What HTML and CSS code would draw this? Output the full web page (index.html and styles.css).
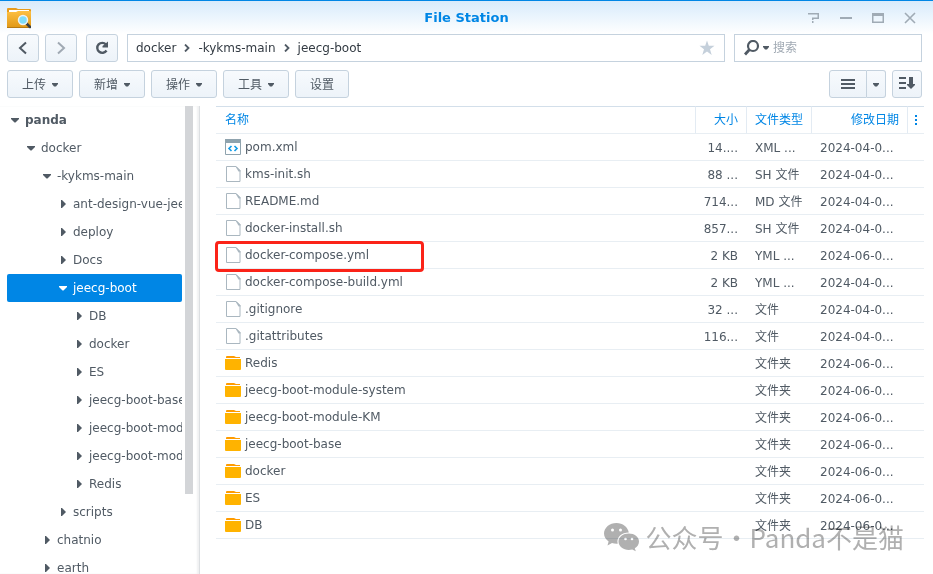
FILE: index.html
```html
<!DOCTYPE html>
<html lang="zh-CN">
<head>
    <meta charset="UTF-8">
    <meta name="viewport" content="width=device-width, initial-scale=1.0">
    <title>File Station</title>
    <link rel="stylesheet" href="styles.css">
</head>
<body>

<!-- Shared icons -->
<svg class="sprite" aria-hidden="true">
    <symbol id="caret" viewBox="0 0 6 4"><path d="M0 0h6v1L4 3.500H2L0 1z"/></symbol>
    <symbol id="open" viewBox="0 0 8 8"><path d="M0 2h8v1L4.500 6.500h-1L0 3z"/></symbol>
    <symbol id="closed" viewBox="0 0 8 8"><path d="M2 0h1l3.500 3.500v1L3 8H2z"/></symbol>
    <symbol id="sep" viewBox="0 0 6 8"><path d="M1 0.500L4.500 4 1 7.500" fill="none" stroke="#505a64" stroke-width="1.800"/></symbol>
    <symbol id="file" viewBox="0 0 16 16">
        <path d="M1.500 .500h9.500l4 4v11H1.500z" fill="#fff" stroke="#aab7c0"/>
        <path d="M10.500 0.500h1l4 4v1h-2z" fill="#aab7c0"/>
    </symbol>
    <symbol id="xml" viewBox="0 0 16 16">
        <path d="M.500 .500h15v15H.500z" fill="#fff" stroke="#8fa3ae"/>
        <path d="M0 0h16v4H0z" fill="#8fa3ae"/>
        <path d="M6.500 7L4 9.500 6.500 12M9.500 7l2.500 2.500L9.500 12" fill="none" stroke="#0f9be8" stroke-width="1.600"/>
    </symbol>
    <symbol id="folder" viewBox="0 0 16 16">
        <path d="M1 3V2q0-1 1-1h7l2 1h4v1z" fill="#ff9c00"/>
        <path d="M0 4h16v10q0 1-1 1H1q-1 0-1-1z" fill="#ffb300"/>
    </symbol>
</svg>

<div class="window">
    <header class="titlebar">
        <svg class="app-icon" viewBox="0 0 24 22">
            <defs>
                <linearGradient id="gold" x1="0" y1="0" x2="0" y2="1">
                    <stop offset="0" stop-color="#fdc044"/>
                    <stop offset="1" stop-color="#e29a18"/>
                </linearGradient>
            </defs>
            <path d="M0 2q0-1 1-1h8l2 1h12q1 0 1 1v17q0 1-1 1H1q-1 0-1-1z" fill="#e79b1c"/>
            <path d="M2 3h20v3H2z" fill="#fff"/>
            <path d="M0 5h9l2-1h12q1 0 1 1v15H0z" fill="url(#gold)"/>
            <path d="M0 20h24v1H0z" fill="#b67a13"/>
            <path d="M19 16l4 4" stroke="#3a3f42" stroke-width="2.500" stroke-linecap="round"/>
            <circle cx="16" cy="13" r="4.500" fill="#7fdcf8" stroke="#eef3f5" stroke-width="1.500"/>
        </svg>
        <h1 class="title">File Station</h1>
        <div class="controls">
            <button class="control" aria-label="帮助"><svg viewBox="0 0 12 12"><path d="M0 1.750h10.250v4.500H4.750V8M4.750 9v2" fill="none" stroke="#a0abb5" stroke-width="1.500"/></svg></button>
            <button class="control" aria-label="最小化"><svg viewBox="0 0 12 12"><path d="M0 5h12v2H0z" fill="#a0abb5"/></svg></button>
            <button class="control" aria-label="最大化"><svg viewBox="0 0 12 12"><path d="M0 1h12v10H0zM1.500 4v5.500h9V4z" fill="#a0abb5" fill-rule="evenodd"/></svg></button>
            <button class="control" aria-label="关闭"><svg viewBox="0 0 12 12"><path d="M1 1l10 10M11 1L1 11" stroke="#a0abb5" stroke-width="1.600"/></svg></button>
        </div>
    </header>

    <div class="navbar">
        <div class="history">
            <button class="btn btn-icon" aria-label="后退"><svg viewBox="0 0 16 16"><path d="M11 2.500L5 8l6 5.500" fill="none" stroke="#505a64" stroke-width="2"/></svg></button>
            <button class="btn btn-icon" aria-label="前进"><svg viewBox="0 0 16 16"><path d="M5 2.500L11 8l-6 5.500" fill="none" stroke="#a0a9b3" stroke-width="2"/></svg></button>
        </div>
        <button class="btn btn-icon" aria-label="刷新"><svg viewBox="0 0 16 16"><path d="M12 4.500A5 5 0 1 0 12.500 10.500" fill="none" stroke="#505a64" stroke-width="2.400"/><path d="M14 1.500V7.500H8.500V6z" fill="#505a64"/></svg></button>
        <nav class="path">
            <a href="#">docker</a>
            <svg class="sep"><use href="#sep"/></svg>
            <a href="#">-kykms-main</a>
            <svg class="sep"><use href="#sep"/></svg>
            <a href="#">jeecg-boot</a>
            <button class="star" aria-label="收藏"><svg viewBox="0 0 16 16"><path d="M8 .500l1.800 5.300H15.500l-4.500 3.500 1.700 5.700L8 11.600 3.300 15 5 9.300.500 5.800h5.700z" fill="#c5d0db"/></svg></button>
        </nav>
        <label class="search">
            <svg class="lens" viewBox="0 0 16 16"><circle cx="9" cy="6" r="5" fill="none" stroke="#505a64" stroke-width="2.200"/><path d="M5.500 9.500L1 14.500" stroke="#505a64" stroke-width="2.800"/></svg>
            <svg class="caret"><use href="#caret"/></svg>
            <input type="text" placeholder="搜索" aria-label="搜索">
        </label>
    </div>

    <div class="toolbar">
        <button class="btn">上传<svg class="caret"><use href="#caret"/></svg></button>
        <button class="btn">新增<svg class="caret"><use href="#caret"/></svg></button>
        <button class="btn">操作<svg class="caret"><use href="#caret"/></svg></button>
        <button class="btn">工具<svg class="caret"><use href="#caret"/></svg></button>
        <button class="btn">设置</button>
        <div class="views">
            <button class="btn btn-list" aria-label="列表"><svg viewBox="0 0 16 16"><path d="M1 3h14v2H1zM1 7h14v2H1zM1 11h14v2H1z" fill="#505a64"/></svg></button>
            <button class="btn btn-more" aria-label="视图模式"><svg class="caret"><use href="#caret"/></svg></button>
        </div>
        <button class="btn btn-sort" aria-label="排序"><svg viewBox="0 0 16 16"><path d="M0 1h7v2H0zM0 6h7v2H0zM0 11h7v2H0zM10 1h4v7h2v1l-4 4-4-4V8h2z" fill="#505a64"/></svg></button>
    </div>

    <main class="content">
        <aside class="sidebar">
            <ul class="tree">
                <li><a href="#" class="node root"><svg><use href="#open"/></svg>panda</a></li>
                <li><a href="#" class="node level-1"><svg><use href="#open"/></svg>docker</a></li>
                <li><a href="#" class="node level-2"><svg><use href="#open"/></svg>-kykms-main</a></li>
                <li><a href="#" class="node level-3"><svg><use href="#closed"/></svg>ant-design-vue-jeecg</a></li>
                <li><a href="#" class="node level-3"><svg><use href="#closed"/></svg>deploy</a></li>
                <li><a href="#" class="node level-3"><svg><use href="#closed"/></svg>Docs</a></li>
                <li><a href="#" class="node level-3 selected"><svg><use href="#open"/></svg>jeecg-boot</a></li>
                <li><a href="#" class="node level-4"><svg><use href="#closed"/></svg>DB</a></li>
                <li><a href="#" class="node level-4"><svg><use href="#closed"/></svg>docker</a></li>
                <li><a href="#" class="node level-4"><svg><use href="#closed"/></svg>ES</a></li>
                <li><a href="#" class="node level-4"><svg><use href="#closed"/></svg>jeecg-boot-base</a></li>
                <li><a href="#" class="node level-4"><svg><use href="#closed"/></svg>jeecg-boot-module-KM</a></li>
                <li><a href="#" class="node level-4"><svg><use href="#closed"/></svg>jeecg-boot-module-system</a></li>
                <li><a href="#" class="node level-4"><svg><use href="#closed"/></svg>Redis</a></li>
                <li><a href="#" class="node level-3"><svg><use href="#closed"/></svg>scripts</a></li>
                <li><a href="#" class="node level-2"><svg><use href="#closed"/></svg>chatnio</a></li>
                <li><a href="#" class="node level-2"><svg><use href="#closed"/></svg>earth</a></li>
            </ul>
            <div class="scrollbar"></div>
        </aside>

        <section class="files">
            <table>
                <thead>
                    <tr>
                        <th class="col-name">名称</th>
                        <th class="col-size">大小</th>
                        <th class="col-type">文件类型</th>
                        <th class="col-date">修改日期</th>
                        <th class="col-menu"><button class="columns" aria-label="显示列"><svg viewBox="0 0 2 10"><path d="M0 0h2v2H0zM0 4h2v2H0zM0 8h2v2H0z" fill="#0086e5"/></svg></button></th>
                    </tr>
                </thead>
                <tbody>
                    <tr><td><div class="name"><svg><use href="#xml"/></svg>pom.xml</div></td><td class="size">14....</td><td>XML ...</td><td>2024-04-0...</td><td></td></tr>
                    <tr><td><div class="name"><svg><use href="#file"/></svg>kms-init.sh</div></td><td class="size">88 ...</td><td>SH 文件</td><td>2024-04-0...</td><td></td></tr>
                    <tr><td><div class="name"><svg><use href="#file"/></svg>README.md</div></td><td class="size">714...</td><td>MD 文件</td><td>2024-04-0...</td><td></td></tr>
                    <tr><td><div class="name"><svg><use href="#file"/></svg>docker-install.sh</div></td><td class="size">857...</td><td>SH 文件</td><td>2024-04-0...</td><td></td></tr>
                    <tr><td><div class="name marked"><svg><use href="#file"/></svg>docker-compose.yml</div></td><td class="size">2 KB</td><td>YML ...</td><td>2024-06-0...</td><td></td></tr>
                    <tr><td><div class="name"><svg><use href="#file"/></svg>docker-compose-build.yml</div></td><td class="size">2 KB</td><td>YML ...</td><td>2024-04-0...</td><td></td></tr>
                    <tr><td><div class="name"><svg><use href="#file"/></svg>.gitignore</div></td><td class="size">32 ...</td><td>文件</td><td>2024-04-0...</td><td></td></tr>
                    <tr><td><div class="name"><svg><use href="#file"/></svg>.gitattributes</div></td><td class="size">116...</td><td>文件</td><td>2024-04-0...</td><td></td></tr>
                    <tr><td><div class="name"><svg><use href="#folder"/></svg>Redis</div></td><td></td><td>文件夹</td><td>2024-06-0...</td><td></td></tr>
                    <tr><td><div class="name"><svg><use href="#folder"/></svg>jeecg-boot-module-system</div></td><td></td><td>文件夹</td><td>2024-06-0...</td><td></td></tr>
                    <tr><td><div class="name"><svg><use href="#folder"/></svg>jeecg-boot-module-KM</div></td><td></td><td>文件夹</td><td>2024-06-0...</td><td></td></tr>
                    <tr><td><div class="name"><svg><use href="#folder"/></svg>jeecg-boot-base</div></td><td></td><td>文件夹</td><td>2024-06-0...</td><td></td></tr>
                    <tr><td><div class="name"><svg><use href="#folder"/></svg>docker</div></td><td></td><td>文件夹</td><td>2024-06-0...</td><td></td></tr>
                    <tr><td><div class="name"><svg><use href="#folder"/></svg>ES</div></td><td></td><td>文件夹</td><td>2024-06-0...</td><td></td></tr>
                    <tr><td><div class="name"><svg><use href="#folder"/></svg>DB</div></td><td></td><td>文件夹</td><td>2024-06-0...</td><td></td></tr>
                </tbody>
            </table>
        </section>
    </main>

    <div class="watermark">
        <svg viewBox="0 0 36 30">
            <path d="M12.500 1C5.600 1 0 5.700 0 11.500c0 3.200 1.800 6 4.600 8L3.500 23.500l4.500-2.400c1.400.4 2.900.7 4.500.7h1.200C12 15 18 10.500 24.800 10.500 23.800 5 18.700 1 12.500 1z"/>
            <path d="M35 19.500c0-4.500-4.600-8-10.200-8s-10.300 3.500-10.300 8 4.700 8.500 10.300 8.500c1.200 0 2.400-.2 3.500-.5l3.500 1.800-1-3c2.500-1.500 4.200-4 4.200-6.800z"/>
            <g fill="#fff"><circle cx="8.500" cy="8" r="1.500"/><circle cx="16.500" cy="8" r="1.500"/><circle cx="21.500" cy="17" r="1.300"/><circle cx="28" cy="17" r="1.300"/></g>
        </svg>
        <span>公众号·Panda不是猫</span>
    </div>
</div>

</body>
</html>
```

FILE: styles.css
```css
*, *::before, *::after {
    box-sizing: border-box;
}
body {
    margin: 0;
    background: #fff;
    color: #505a64;
    font-family: "DejaVu Sans", "Noto Sans CJK SC", sans-serif;
    font-size: 12px;
    line-height: 18px;
}
button, input {
    font: inherit;
    color: inherit;
    margin: 0;
    padding: 0;
    border: 0;
    background: none;
}
button {
    cursor: pointer;
}
a {
    color: inherit;
    text-decoration: none;
}
svg {
    display: block;
    flex: none;
    fill: #505a64;
}
.sprite {
    position: absolute;
    width: 0;
    height: 0;
}
.window {
    position: relative;
    display: flex;
    flex-direction: column;
    height: 100vh;
    overflow: hidden;
}

/* Title bar */
.titlebar {
    display: grid;
    grid-template-columns: 1fr auto 1fr;
    align-items: center;
    height: 34px;
    border-top: 1px solid #0086e5;
    background: linear-gradient(#d8ebfb, #fff);
}
.app-icon {
    width: 24px;
    height: 22px;
    margin-left: 7px;
}
.title {
    margin: 0;
    font-size: 13px;
    color: #0086e5;
}
.controls {
    display: flex;
    justify-content: flex-end;
    gap: 20px;
    padding-right: 17px;
}
.control svg {
    width: 12px;
    height: 12px;
}

/* Buttons */
.btn {
    display: flex;
    align-items: center;
    justify-content: center;
    gap: 6px;
    height: 28px;
    padding: 2px 14px 0;
    border: 1px solid #c5d2de;
    border-radius: 3px;
    background: linear-gradient(#f7fafd, #edf3f9);
}
.btn:hover {
    background: #e6f0f9;
}
.btn svg {
    width: 16px;
    height: 16px;
}
.caret, .btn .caret {
    width: 6px;
    height: 4px;
}
.btn-icon {
    width: 32px;
    padding: 0;
}

/* Path and search */
.navbar {
    display: flex;
    gap: 9px;
    padding: 0 11px 0 7px;
}
.history {
    display: flex;
    gap: 6px;
}
.path, .search {
    display: flex;
    align-items: center;
    height: 28px;
    border: 1px solid #c5d2de;
    background: #fff;
}
.path {
    flex: 1;
    gap: 8px;
    padding: 0 9px 0 8px;
    color: #333b43;
}
.sep {
    width: 6px;
    height: 8px;
}
.star {
    margin-left: auto;
}
.star svg {
    width: 16px;
    height: 16px;
}
.search {
    flex: 0 0 188px;
    min-width: 0;
    padding: 0 9px;
}
.lens {
    width: 16px;
    height: 16px;
    margin-right: 3px;
}
.search input {
    flex: 1;
    min-width: 0;
    margin-left: 4px;
    outline: none;
}
.search input::placeholder {
    color: #a0a9b3;
    opacity: 1;
}

/* Toolbar */
.toolbar {
    display: flex;
    gap: 6px;
    padding: 8px 11px 8px 7px;
}
.views {
    display: flex;
    margin-left: auto;
}
.btn-list {
    width: 38px;
    padding: 0;
    border-radius: 3px 0 0 3px;
}
.btn-more {
    width: 19px;
    padding: 2px 0 0;
    border-left: 0;
    border-radius: 0 3px 3px 0;
}
.btn-sort {
    width: 30px;
    padding: 0;
}

/* Folder tree */
.content {
    flex: 1;
    display: flex;
    min-height: 0;
}
.sidebar {
    flex: 0 0 200px;
    display: flex;
    gap: 3px;
    padding-left: 7px;
    border-right: 1px solid #dcdfe2;
    box-shadow: inset -2px 0 2px #f0f1f2;
}
.tree {
    width: 175px;
    margin: 0;
    padding: 0;
    list-style: none;
}
.node {
    display: flex;
    align-items: center;
    gap: 6px;
    height: 28px;
    padding-left: 4px;
    border-radius: 2px;
    overflow: hidden;
    white-space: nowrap;
}
.node svg {
    width: 8px;
    height: 8px;
}
.root {
    font-weight: bold;
}
.level-1 {
    padding-left: 20px;
}
.level-2 {
    padding-left: 36px;
}
.level-3 {
    padding-left: 52px;
}
.level-4 {
    padding-left: 68px;
}
.selected {
    background: #0086e5;
    color: #fff;
}
.selected svg {
    fill: #fff;
}
.scrollbar {
    width: 8px;
    height: 83%;
    background: #d3d5d8;
}

/* File list */
.files {
    flex: 1;
    padding: 0 9px 0 16px;
}
table {
    width: 100%;
    table-layout: fixed;
    border-collapse: separate;
    border-spacing: 0;
}
th {
    height: 28px;
    padding: 0 8px;
    border-top: 1px solid #d3dfea;
    border-bottom: 1px solid #e8eef3;
    border-left: 1px solid #e3ebf3;
    color: #0086e5;
    font-weight: normal;
    text-align: left;
}
td {
    height: 27px;
    padding: 2px 0 0 9px;
    border-bottom: 1px solid #e8eef3;
    white-space: nowrap;
}
.col-name {
    border-left: 0;
    padding-left: 9px;
}
.col-size {
    width: 51px;
    text-align: right;
}
.col-type {
    width: 65px;
}
.col-date {
    width: 96px;
    text-align: right;
}
.col-menu {
    width: 17px;
    padding: 0 7px;
}
.columns {
    display: block;
}
.columns svg {
    width: 2px;
    height: 10px;
}
td.size {
    padding-right: 8px;
    padding-left: 8px;
    text-align: right;
}
.name {
    position: relative;
    display: flex;
    align-items: center;
    gap: 4px;
    padding-bottom: 2px;
}
.name svg {
    width: 16px;
    height: 16px;
}
/* Red frame around the compose file */
.marked::after {
    content: "";
    position: absolute;
    top: -5px;
    left: -10px;
    width: 209px;
    height: 31px;
    border: 3px solid #fb2318;
    border-radius: 4px;
}

.watermark {
    position: absolute;
    right: 29px;
    bottom: 19px;
    display: flex;
    align-items: center;
    gap: 6px;
    color: #b0b0b0;
    font-family: "Noto Sans CJK SC", sans-serif;
    font-size: 26px;
    line-height: 36px;
    mix-blend-mode: multiply;
}
.watermark svg {
    width: 36px;
    height: 30px;
    fill: #b0b0b0;
}
```
